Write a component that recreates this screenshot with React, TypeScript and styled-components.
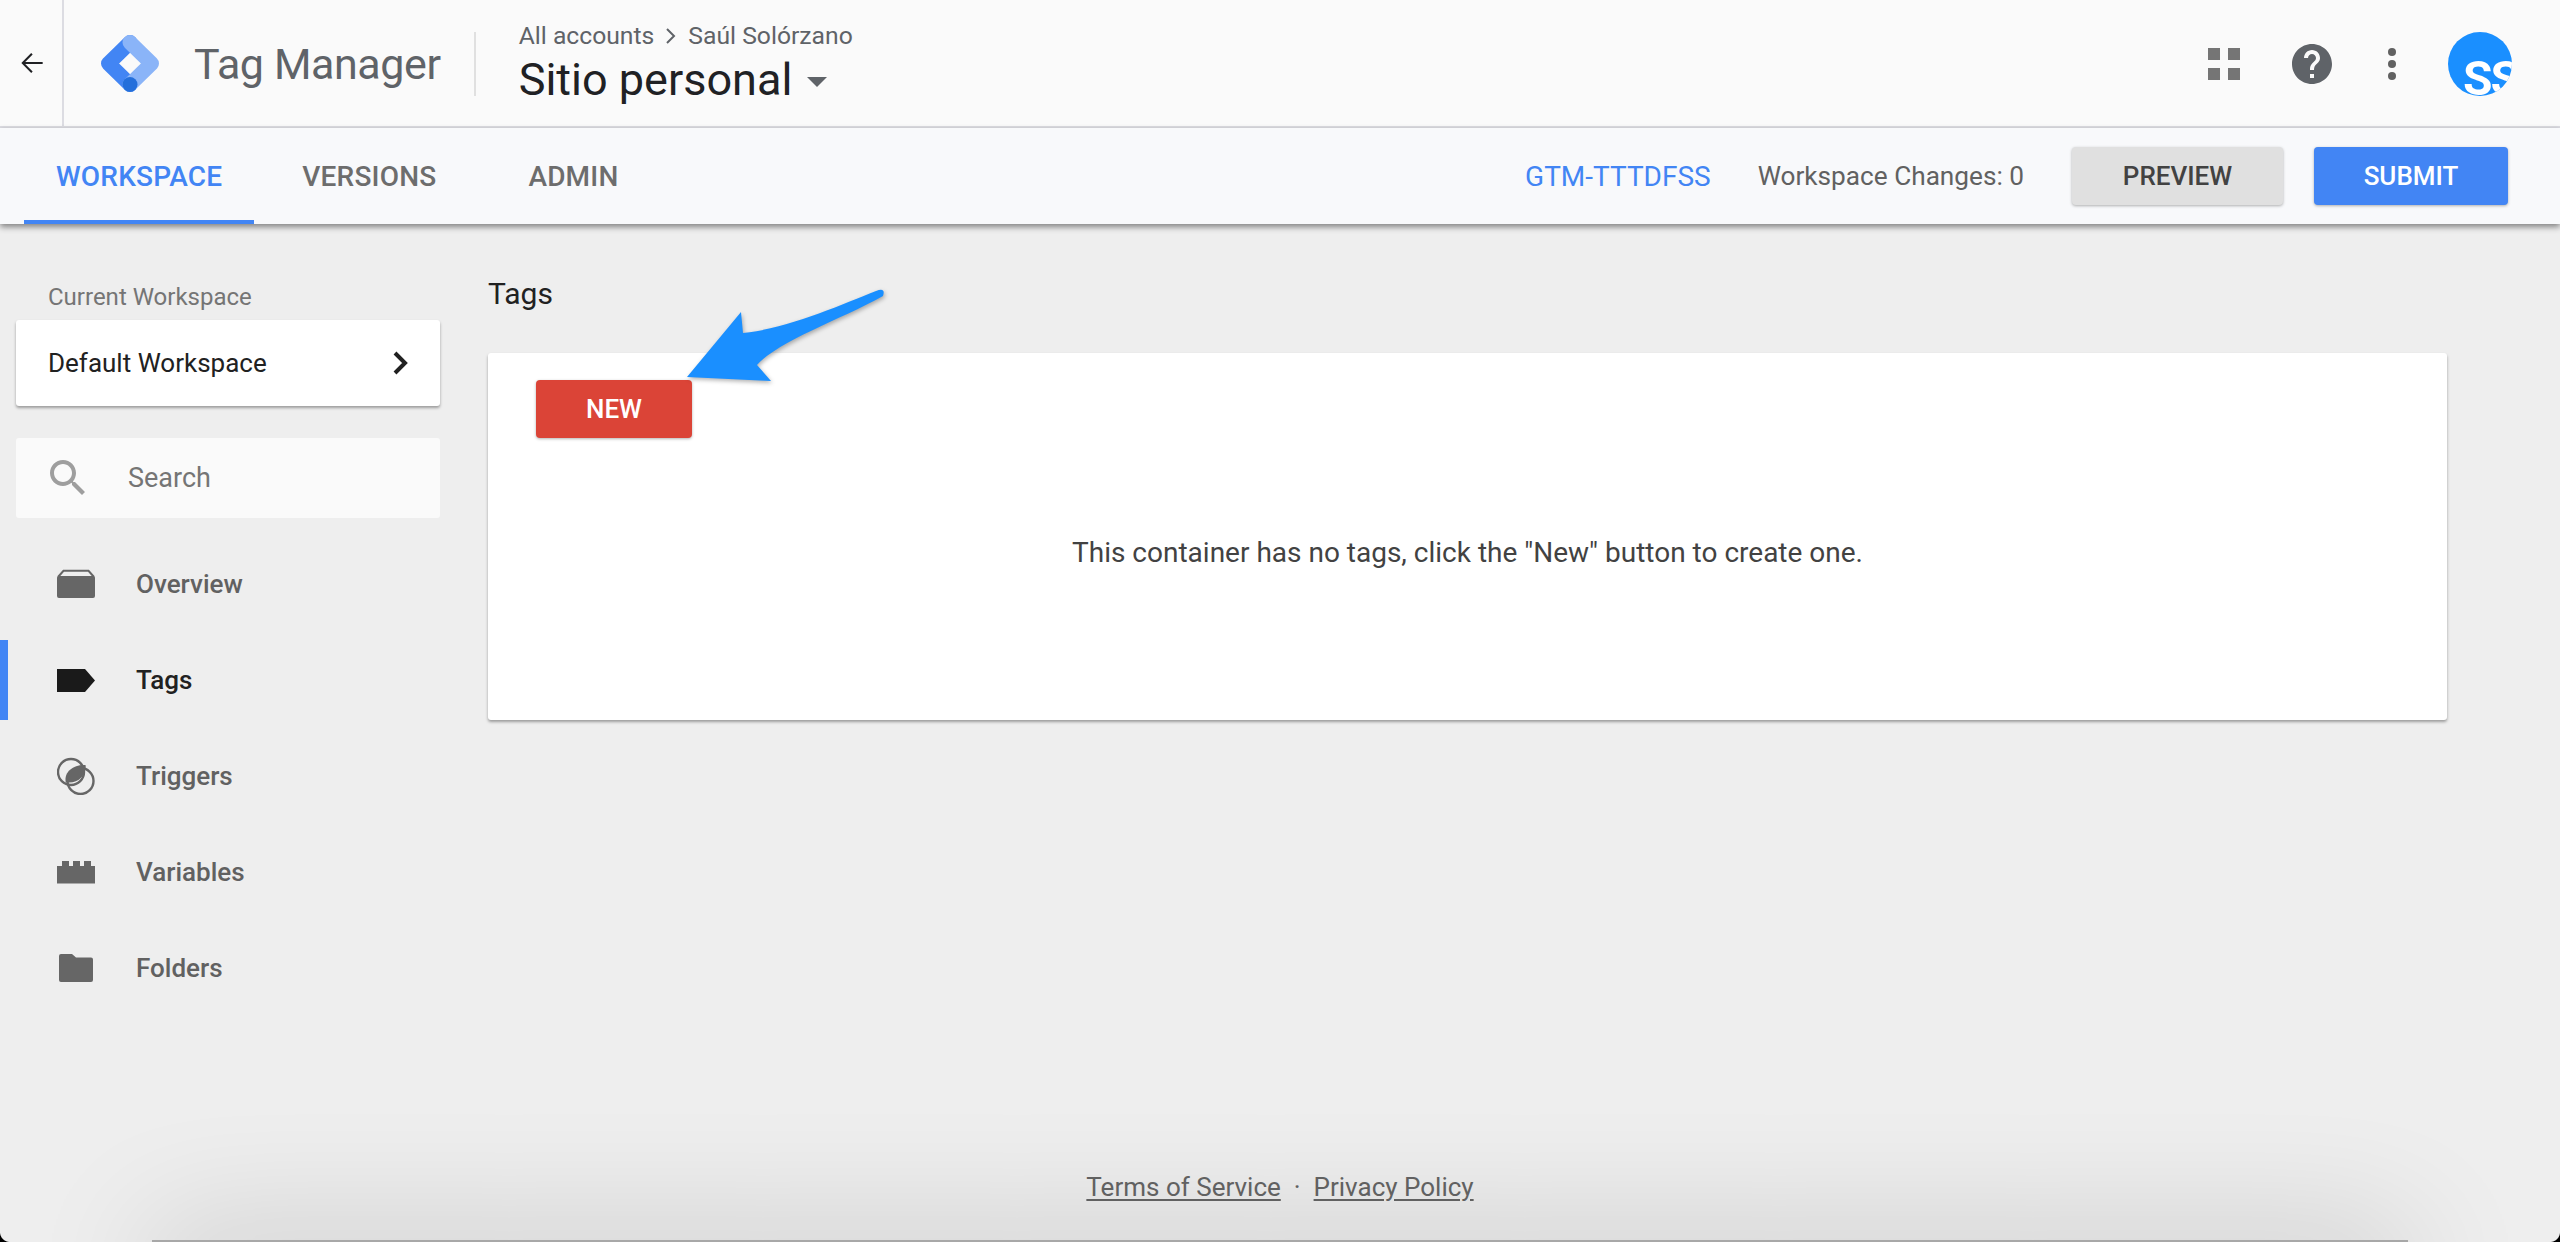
import * as React from 'react';
import styled, { createGlobalStyle } from 'styled-components';

const GlobalStyle = createGlobalStyle`
  html, body {
    margin: 0;
    padding: 0;
    background: #eeeeee;
    font-family: 'Roboto', 'Liberation Sans', sans-serif;
  }
`;

const Page = styled.div`
  position: relative;
  width: 2560px;
  height: 1242px;
  overflow: hidden;
  display: flex;
  flex-direction: column;
  background: #eeeeee;
`;

const Header = styled.header`
  height: 124px;
  display: flex;
  align-items: center;
  background: #fafafa;
  border-bottom: 2px solid #dcdce2;
  padding: 2px 48px 0 0;
`;

const BackSlot = styled.div`
  width: 60px;
  height: 126px;
  margin-top: -2px;
  padding-left: 2px;
  display: flex;
  align-items: center;
  justify-content: center;
  border-right: 2px solid #dcdce2;
`;

const LogoSlot = styled.div`
  margin-left: 36px;
  width: 60px;
  height: 60px;
`;

const Product = styled.div`
  margin-left: 34px;
  font-size: 43px;
  color: #5f6368;
  letter-spacing: -0.4px;
`;

const Divider = styled.div`
  margin-left: 33px;
  width: 2px;
  height: 64px;
  background: #e0e0e0;
`;

const Crumbs = styled.div`
  margin-left: 43px;
  display: flex;
  flex-direction: column;
`;

const CrumbRow = styled.div`
  display: flex;
  align-items: center;
  gap: 11px;
  font-size: 24.7px;
  line-height: 28px;
  color: #5f6368;
`;

const ContainerRow = styled.div`
  display: flex;
  align-items: center;
  gap: 15px;
  font-size: 45px;
  line-height: 52px;
  margin-top: 4px;
  color: #202124;
`;

const Caret = styled.span`
  width: 0;
  height: 0;
  border-left: 10px solid transparent;
  border-right: 10px solid transparent;
  border-top: 10px solid #5f6368;
  margin-top: 4px;
`;

const HeaderIcons = styled.div`
  margin-left: auto;
  display: flex;
  align-items: center;
  gap: 32px;
`;

const HelpSlot = styled.div`
  margin-left: 8px;
  height: 48px;
`;

const GridIcon = styled.div`
  width: 48px;
  height: 48px;
  display: grid;
  grid-template-columns: 12px 12px;
  grid-auto-rows: 12px;
  gap: 8px;
  align-content: center;
  justify-content: center;

  span {
    background: #757575;
  }
`;

const Avatar = styled.div`
  position: relative;
  width: 64px;
  height: 64px;
  border-radius: 50%;
  overflow: hidden;
  background: #1a8fff;
`;

const AvatarText = styled.span`
  position: absolute;
  left: 15px;
  top: 19px;
  font-size: 48px;
  line-height: 56px;
  font-weight: 700;
  letter-spacing: -2px;
  white-space: nowrap;
  background: linear-gradient(125deg, #ffffff 0, #ffffff 72%, #e8e8e8 72%);
  -webkit-background-clip: text;
  background-clip: text;
  color: transparent;
`;

const TabBar = styled.div`
  position: relative;
  z-index: 2;
  height: 96px;
  display: flex;
  align-items: center;
  padding: 0 52px 0 24px;
  background: #f8f9fb;
  box-shadow: 0 3px 6px rgba(0, 0, 0, 0.45);
`;

const Tab = styled.div<{ $active?: boolean }>`
  height: 96px;
  box-sizing: border-box;
  padding: 4px 32px 0;
  margin-right: 16px;
  display: flex;
  align-items: center;
  font-size: 28px;
  font-weight: 500;
  letter-spacing: 0.2px;
  color: ${(p) => (p.$active ? '#4285f4' : '#6d6d6d')};
  border-bottom: 4px solid ${(p) => (p.$active ? '#4285f4' : 'transparent')};

  &:nth-child(2) {
    margin-right: 28px;
  }
`;

const TabSide = styled.div`
  margin-left: auto;
  display: flex;
  align-items: center;
`;

const ContainerId = styled.span`
  font-size: 28px;
  color: #4285f4;
`;

const Changes = styled.span`
  margin-left: 47px;
  font-size: 26.2px;
  color: #616161;
`;

const RaisedButton = styled.div<{ $kind: 'grey' | 'blue' | 'red' }>`
  height: 58px;
  display: flex;
  align-items: center;
  justify-content: center;
  border-radius: 4px;
  font-size: 26px;
  font-weight: 500;
  box-shadow: 0 1px 3px rgba(0, 0, 0, 0.3);
  background: ${(p) => (p.$kind === 'grey' ? '#e0e0e0' : p.$kind === 'blue' ? '#4285f4' : '#db4437')};
  color: ${(p) => (p.$kind === 'grey' ? '#424242' : '#ffffff')};
`;

const PreviewButton = styled(RaisedButton)`
  margin-left: 48px;
  width: 211px;
`;

const SubmitButton = styled(RaisedButton)`
  margin-left: 31px;
  width: 194px;
`;

const NewButton = styled(RaisedButton)`
  width: 156px;
`;

const Body = styled.div`
  flex: 1;
  display: flex;
  min-height: 0;
`;

const Sidebar = styled.aside`
  width: 488px;
  flex-shrink: 0;
  padding-top: 59px;
`;

const SideLabel = styled.div`
  margin-left: 48px;
  font-size: 24px;
  line-height: 28px;
  color: #757575;
`;

const WorkspaceCard = styled.div`
  margin: 9px 48px 0 16px;
  height: 86px;
  box-sizing: border-box;
  padding: 0 30px 0 32px;
  display: flex;
  align-items: center;
  justify-content: space-between;
  background: #ffffff;
  border-radius: 3px;
  box-shadow: 0 2px 3px rgba(0, 0, 0, 0.35);
  font-size: 26px;
  color: #212121;
`;

const SearchBox = styled.div`
  margin: 32px 48px 0 16px;
  height: 80px;
  display: flex;
  align-items: center;
  background: #fafafa;
  border-radius: 3px;
  padding-left: 28px;
  font-size: 27px;
  color: #757575;
  gap: 36px;
`;

const Nav = styled.nav`
  margin-top: 18px;
`;

const NavRow = styled.div<{ $active?: boolean }>`
  height: 96px;
  display: flex;
  align-items: center;
  position: relative;
  padding-left: 57px;
  gap: 41px;
  font-size: 26px;
  font-weight: 500;
  color: ${(p) => (p.$active ? '#212121' : '#616161')};

  &::before {
    content: '';
    display: ${(p) => (p.$active ? 'block' : 'none')};
    position: absolute;
    left: 0;
    top: 8px;
    bottom: 8px;
    width: 8px;
    background: #4285f4;
  }
`;

const Main = styled.main`
  flex: 1;
  display: flex;
  flex-direction: column;
  padding: 0 113px 0 0;
`;

const PageTitle = styled.h1`
  margin: 52px 0 0;
  font-size: 30px;
  line-height: 36px;
  font-weight: 400;
  color: #212121;
`;

const EmptyCard = styled.section`
  position: relative;
  margin-top: 41px;
  height: 367px;
  box-sizing: border-box;
  padding: 27px 48px 0;
  background: #ffffff;
  border-radius: 3px;
  box-shadow: 0 2px 3px rgba(0, 0, 0, 0.35);
`;

const EmptyText = styled.p`
  margin: 97px 0 0;
  text-align: center;
  font-size: 28px;
  line-height: 36px;
  color: #424242;
`;

const Callout = styled.svg`
  position: absolute;
  left: 192px;
  top: -68px;
  filter: drop-shadow(1px 2px 2px rgba(0, 0, 0, 0.3));
`;

const Footer = styled.footer`
  position: absolute;
  left: 0;
  right: 0;
  bottom: 40px;
  z-index: 1;
  display: flex;
  justify-content: center;
  align-items: center;
  gap: 13px;
  font-size: 26px;
  color: #616161;

  u {
    text-underline-offset: 3px;
  }
`;

const BottomShadow = styled.div`
  position: absolute;
  left: 152px;
  right: 152px;
  bottom: -60px;
  height: 62px;
  background: #a8a8a8;
  box-shadow: 0 0 130px rgba(0, 0, 0, 0.2);
`;

const Corner = styled.span<{ $side: 'left' | 'right' }>`
  position: absolute;
  bottom: 0;
  ${(p) => p.$side}: 0;
  width: 10px;
  height: 10px;
  background: radial-gradient(
    circle at ${(p) => (p.$side === 'left' ? '100% 0' : '0 0')},
    transparent 9.5px,
    #000000 10.5px
  );
`;

const BackArrow = () => (
  <svg width="32" height="32" viewBox="0 0 24 24" fill="#202124">
    <path d="M20 11.2H6.9l5.6-5.6L11.4 4.5 4 12l7.4 7.5 1.1-1.1-5.6-5.6H20z" />
  </svg>
);

const TagManagerLogo = () => (
  <svg width="60" height="60" viewBox="0 0 60 60" fill="none" strokeWidth="15" strokeLinecap="round" strokeLinejoin="round">
    <path d="M30 50.5 L8.5 29.5 L30 8.5" stroke="#4285f4" />
    <path d="M30 8.5 L51.5 29.5 L30 50.5" stroke="#8ab4f8" />
    <circle cx="30" cy="50.5" r="7.5" fill="#246fdb" />
  </svg>
);

const HelpIcon = () => (
  <svg width="48" height="48" viewBox="0 0 24 24" fill="#5f6368">
    <path d="M12 2C6.48 2 2 6.48 2 12s4.48 10 10 10 10-4.48 10-10S17.52 2 12 2zm1 17h-2v-2h2v2zm2.07-7.75l-.9.92C13.45 12.9 13 13.5 13 15h-2v-.5c0-1.1.45-2.1 1.17-2.83l1.24-1.26c.37-.36.59-.86.59-1.41 0-1.1-.9-2-2-2s-2 .9-2 2H8c0-2.21 1.79-4 4-4s4 1.79 4 4c0 .88-.36 1.68-.93 2.25z" />
  </svg>
);

const DotsIcon = () => (
  <svg width="48" height="48" viewBox="0 0 48 48" fill="#616161">
    <circle cx="24" cy="12" r="4" />
    <circle cx="24" cy="24" r="4" />
    <circle cx="24" cy="36" r="4" />
  </svg>
);

const ChevronIcon = () => (
  <svg width="18" height="26" viewBox="0 0 18 26" fill="none" stroke="#212121" strokeWidth="4">
    <path d="M3 3l10 10L3 23" />
  </svg>
);

const SearchIcon = () => (
  <svg width="48" height="48" viewBox="0 0 24 24" fill="#9e9e9e">
    <path d="M15.5 14h-.79l-.28-.27C15.41 12.59 16 11.11 16 9.5 16 5.91 13.09 3 9.5 3S3 5.91 3 9.5 5.91 16 9.5 16c1.61 0 3.09-.59 4.23-1.57l.27.28v.79l5 4.99L20.49 19l-4.99-5zm-6 0C7.01 14 5 11.99 5 9.5S7.01 5 9.5 5 14 7.01 14 9.5 11.99 14 9.5 14z" />
  </svg>
);

const OverviewIcon = () => (
  <svg width="38" height="38" viewBox="0 0 38 38" fill="#666666">
    <path d="M0 12.5 A2 2 0 0 1 2 11 H36 A2 2 0 0 1 38 12.5 V31 A2 2 0 0 1 36 33 H2 A2 2 0 0 1 0 31 Z" />
    <path d="M1 12 L6.5 5.8 H31.5 L37 12" fill="none" stroke="#666666" strokeWidth="2" />
  </svg>
);

const TagIcon = () => (
  <svg width="38" height="38" viewBox="0 0 38 38" fill="#1a1a1a">
    <path d="M0 8 H28 L38 19.5 L28 31 H0 Z" />
  </svg>
);

const TriggerIcon = () => (
  <svg width="38" height="38" viewBox="0 0 38 38">
    <circle cx="14" cy="15" r="13" fill="none" stroke="#666666" strokeWidth="2.4" />
    <circle cx="23.5" cy="24" r="13" fill="none" stroke="#666666" strokeWidth="2.4" />
    <path d="M9 26 C7 15 18 8 29 9 C30 20 20 28 9 26 Z" fill="#666666" transform="translate(-.3 -.8)" />
  </svg>
);

const VariableIcon = () => (
  <svg width="38" height="38" viewBox="0 0 38 38" fill="#666666">
    <path d="M0 13 H5 V8 H12 V13 H16 V8 H23 V13 H27 V8 H34 V13 H38 V30.5 H0 Z" />
  </svg>
);

const FolderIcon = () => (
  <svg width="38" height="38" viewBox="0 0 38 38" fill="#666666">
    <path d="M2 7 A2 2 0 0 1 4 5 H15 L19 8.5 H34 A2 2 0 0 1 36 10.5 V31 A2 2 0 0 1 34 33 H4 A2 2 0 0 1 2 31 Z" />
  </svg>
);

const navItems = [
  { label: 'Overview', icon: <OverviewIcon /> },
  { label: 'Tags', icon: <TagIcon />, active: true },
  { label: 'Triggers', icon: <TriggerIcon /> },
  { label: 'Variables', icon: <VariableIcon /> },
  { label: 'Folders', icon: <FolderIcon /> },
];

const App: React.FC = () => {
  return (
    <Page>
      <GlobalStyle />
      <Header>
        <BackSlot>
          <BackArrow />
        </BackSlot>
        <LogoSlot>
          <TagManagerLogo />
        </LogoSlot>
        <Product>Tag Manager</Product>
        <Divider />
        <Crumbs>
          <CrumbRow>
            <span>All accounts</span>
            <svg width="12" height="18" viewBox="0 0 12 18" fill="none" stroke="#5f6368" strokeWidth="2">
              <path d="M2 2l7 7-7 7" />
            </svg>
            <span>Saúl Solórzano</span>
          </CrumbRow>
          <ContainerRow>
            Sitio personal
            <Caret />
          </ContainerRow>
        </Crumbs>
        <HeaderIcons>
          <GridIcon>
            <span />
            <span />
            <span />
            <span />
          </GridIcon>
          <HelpSlot>
            <HelpIcon />
          </HelpSlot>
          <DotsIcon />
          <Avatar>
            <AvatarText>SS</AvatarText>
          </Avatar>
        </HeaderIcons>
      </Header>

      <TabBar>
        <Tab $active>WORKSPACE</Tab>
        <Tab>VERSIONS</Tab>
        <Tab>ADMIN</Tab>
        <TabSide>
          <ContainerId>GTM-TTTDFSS</ContainerId>
          <Changes>Workspace Changes: 0</Changes>
          <PreviewButton $kind="grey">PREVIEW</PreviewButton>
          <SubmitButton $kind="blue">SUBMIT</SubmitButton>
        </TabSide>
      </TabBar>

      <Body>
        <Sidebar>
          <SideLabel>Current Workspace</SideLabel>
          <WorkspaceCard>
            Default Workspace
            <ChevronIcon />
          </WorkspaceCard>
          <SearchBox>
            <SearchIcon />
            Search
          </SearchBox>
          <Nav>
            {navItems.map((item) => (
              <NavRow key={item.label} $active={item.active}>
                {item.icon}
                {item.label}
              </NavRow>
            ))}
          </Nav>
        </Sidebar>

        <Main>
          <PageTitle>Tags</PageTitle>
          <EmptyCard>
            <NewButton $kind="red">NEW</NewButton>
            <EmptyText>This container has no tags, click the "New" button to create one.</EmptyText>
            <Callout width="210" height="105" viewBox="680 285 210 105" fill="#1a8fff">
              <path d="M741 312 L743 333 C790 328 840 305 876 291 Q886 287 883 296 C840 320 780 340 757 365 L771 381 L687 377 Z" />
            </Callout>
          </EmptyCard>
        </Main>
      </Body>

      <Footer>
        <u>Terms of Service</u>
        <span>·</span>
        <u>Privacy Policy</u>
      </Footer>
      <BottomShadow />
      <Corner $side="left" />
      <Corner $side="right" />
    </Page>
  );
};

export default App;
